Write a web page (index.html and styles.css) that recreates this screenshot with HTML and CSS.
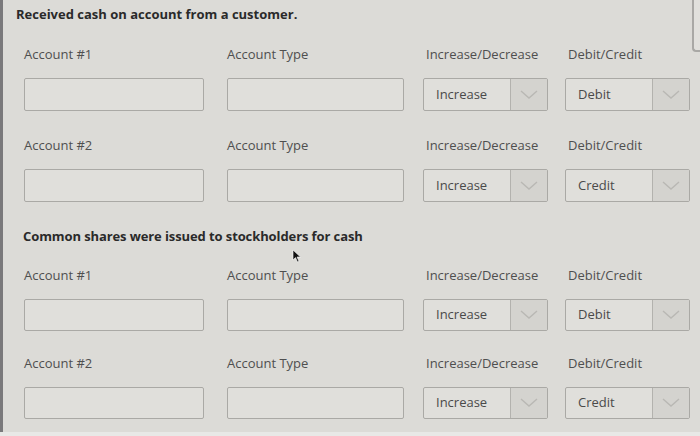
FILE: index.html
```html
<!DOCTYPE html>
<html lang="en">
<head>
<meta charset="utf-8">
<title>Journal entries</title>
<link rel="stylesheet" href="styles.css">
</head>
<body>
<div class="screen">
  <div class="content">
    <section class="block first">
      <h2 class="title">Received cash on account from a customer.</h2>
      <div class="grid">
        <div class="field c1"><div class="label">Account #1</div><div class="input"></div></div>
        <div class="field c2"><div class="label">Account Type</div><div class="input"></div></div>
        <div class="field c3"><div class="label">Increase/Decrease</div><div class="select"><span class="val">Increase</span><span class="btn"><svg width="18" height="10" viewBox="0 0 18 10"><path d="M1 1 L9 8 L17 1" fill="none" stroke="#b9b8b4" stroke-width="1.4"/></svg></span></div></div>
        <div class="field c4"><div class="label">Debit/Credit</div><div class="select"><span class="val">Debit</span><span class="btn"><svg width="18" height="10" viewBox="0 0 18 10"><path d="M1 1 L9 8 L17 1" fill="none" stroke="#b9b8b4" stroke-width="1.4"/></svg></span></div></div>

        <div class="field c1"><div class="label">Account #2</div><div class="input"></div></div>
        <div class="field c2"><div class="label">Account Type</div><div class="input"></div></div>
        <div class="field c3"><div class="label">Increase/Decrease</div><div class="select"><span class="val">Increase</span><span class="btn"><svg width="18" height="10" viewBox="0 0 18 10"><path d="M1 1 L9 8 L17 1" fill="none" stroke="#b9b8b4" stroke-width="1.4"/></svg></span></div></div>
        <div class="field c4"><div class="label">Debit/Credit</div><div class="select"><span class="val">Credit</span><span class="btn"><svg width="18" height="10" viewBox="0 0 18 10"><path d="M1 1 L9 8 L17 1" fill="none" stroke="#b9b8b4" stroke-width="1.4"/></svg></span></div></div>
      </div>
    </section>

    <section class="block second">
      <h2 class="title">Common shares were issued to stockholders for cash<svg class="cursor" width="10" height="14" viewBox="0 0 10 14"><path d="M1 1 L1 11 L3.5 8.6 L5.5 13 L7 12.3 L5 8 L8.5 8 Z" fill="#111" stroke="#fff" stroke-width="0.6"/></svg></h2>
      <div class="grid">
        <div class="field c1"><div class="label">Account #1</div><div class="input"></div></div>
        <div class="field c2"><div class="label">Account Type</div><div class="input"></div></div>
        <div class="field c3"><div class="label">Increase/Decrease</div><div class="select"><span class="val">Increase</span><span class="btn"><svg width="18" height="10" viewBox="0 0 18 10"><path d="M1 1 L9 8 L17 1" fill="none" stroke="#b9b8b4" stroke-width="1.4"/></svg></span></div></div>
        <div class="field c4"><div class="label">Debit/Credit</div><div class="select"><span class="val">Debit</span><span class="btn"><svg width="18" height="10" viewBox="0 0 18 10"><path d="M1 1 L9 8 L17 1" fill="none" stroke="#b9b8b4" stroke-width="1.4"/></svg></span></div></div>

        <div class="field c1"><div class="label">Account #2</div><div class="input"></div></div>
        <div class="field c2"><div class="label">Account Type</div><div class="input"></div></div>
        <div class="field c3"><div class="label">Increase/Decrease</div><div class="select"><span class="val">Increase</span><span class="btn"><svg width="18" height="10" viewBox="0 0 18 10"><path d="M1 1 L9 8 L17 1" fill="none" stroke="#b9b8b4" stroke-width="1.4"/></svg></span></div></div>
        <div class="field c4"><div class="label">Debit/Credit</div><div class="select"><span class="val">Credit</span><span class="btn"><svg width="18" height="10" viewBox="0 0 18 10"><path d="M1 1 L9 8 L17 1" fill="none" stroke="#b9b8b4" stroke-width="1.4"/></svg></span></div></div>
      </div>
    </section>
  </div>
  <div class="side"><div class="thumb"></div></div>
</div>
</body>
</html>
```

FILE: styles.css
```css
html, body {
  margin: 0;
  padding: 0;
}
body {
  width: 700px;
  height: 436px;
  overflow: hidden;
  background: #e8e8e6;
  font-family: "Open Sans", "Liberation Sans", sans-serif;
}
.screen {
  height: 432px;
  display: flex;
  background: #dcdbd7;
  border-left: 3px solid #7a797b;
  box-sizing: border-box;
}
.content {
  flex: 1;
}
.side {
  width: 8px;
}
.thumb {
  height: 50px;
  border-left: 2px solid #a9a8a5;
  border-bottom: 2px solid #a9a8a5;
  border-bottom-left-radius: 4px;
  background: #e1e0dc;
}
.title {
  margin: 0;
  font-size: 13px;
  line-height: 20px;
  font-weight: 700;
  color: #2a2a2a;
  position: relative;
}
.first {
  padding-top: 4px;
}
.first .title {
  padding-left: 13px;
}
.second {
  padding-top: 24px;
}
.second .title {
  padding-left: 20px;
  letter-spacing: -0.1px;
}
.cursor {
  position: absolute;
  left: 289px;
  top: 23px;
}
.grid {
  display: grid;
  grid-template-columns: 203px 196px 142px 125px;
  row-gap: 24px;
  padding-left: 21px;
}
.first .grid {
  padding-top: 20px;
}
.second .grid {
  padding-top: 19px;
  row-gap: 22px;
}
.label {
  font-size: 13px;
  line-height: 20px;
  color: #4f4f4f;
  margin-bottom: 14px;
  white-space: nowrap;
}
.c3 .label, .c4 .label {
  padding-left: 3px;
}
.input, .select {
  height: 33px;
  box-sizing: border-box;
  border: 1.5px solid #aaa9a5;
  border-radius: 2px;
  background: #e0dfdb;
}
.second .input, .second .select {
  height: 32px;
}
.c1 .input { width: 180px; }
.c2 .input { width: 177px; }
.select {
  width: 125px;
  display: flex;
  overflow: hidden;
}
.val {
  flex: 1;
  padding-left: 12px;
  font-size: 13px;
  line-height: 30px;
  color: #4a4a4a;
}
.second .val {
  line-height: 29px;
}
.btn {
  width: 36px;
  border-left: 1.5px solid #b3b2ae;
  background: #d4d3cf;
  display: flex;
  align-items: center;
  justify-content: center;
}
```
